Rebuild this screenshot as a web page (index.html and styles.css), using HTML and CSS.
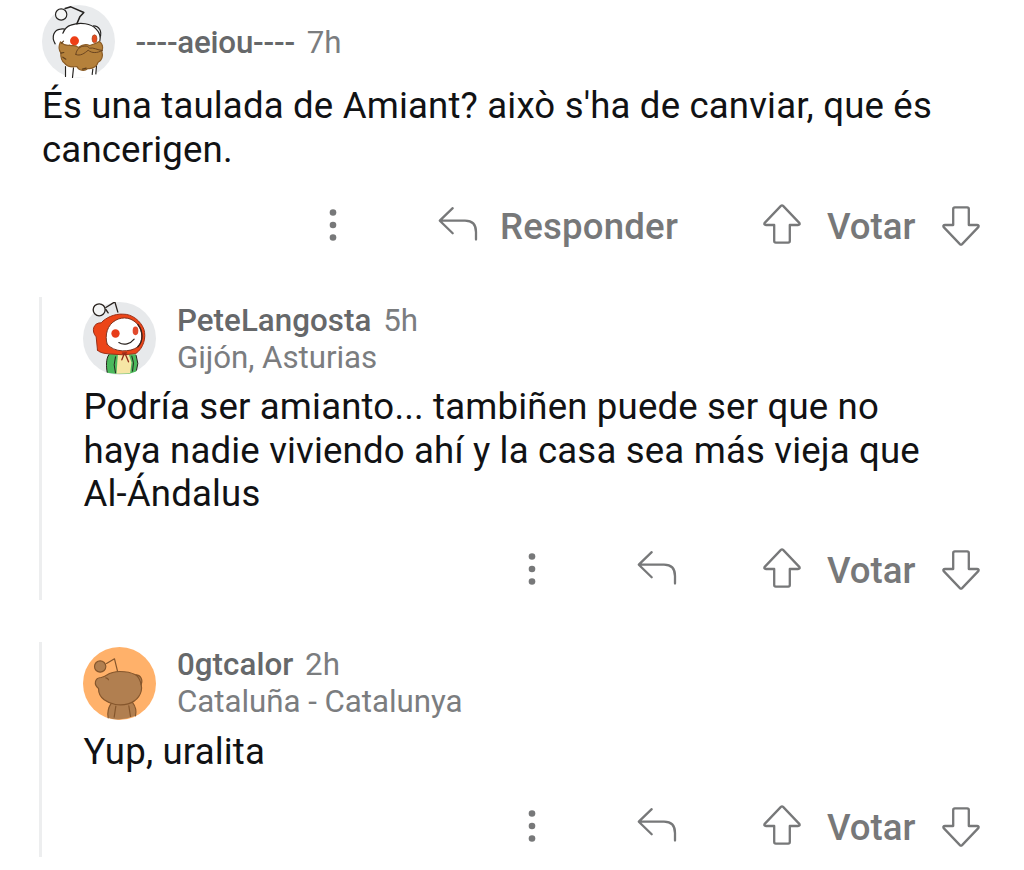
FILE: index.html
```
<!DOCTYPE html>
<html lang="ca">
<head>
    <meta charset="UTF-8">
    <meta name="viewport" content="width=device-width, initial-scale=1.0">
    <title>Comentaris</title>
    <link rel="stylesheet" href="styles.css">
</head>
<body>
    <!-- shared icons -->
    <svg class="sprite">
        <symbol id="dots" viewBox="0 0 8 40">
            <circle cx="4" cy="7.5" r="3.3"/>
            <circle cx="4" cy="20" r="3.3"/>
            <circle cx="4" cy="32.5" r="3.3"/>
        </symbol>
        <symbol id="reply" viewBox="0 0 40 40">
            <path d="M14.7 3.2L1.8 15.7L14.7 28.3M2 15.7H27Q38 15.7 38 27V34.6"/>
        </symbol>
        <symbol id="arrow" viewBox="0 0 38 40">
            <path d="M17.9 1.9Q19 .8 20.1 1.9L36.3 18.9Q37.4 21 35 21H26.8V37Q26.8 38.6 25.2 38.6H12.8Q11.2 38.6 11.2 37V21H3Q.6 21 1.7 18.9Z"/>
        </symbol>
    </svg>

    <div class="comments">
        <div class="comment">
            <div class="header">
                <svg class="avatar" viewBox="35.5 13.5 219 219">
                    <circle cx="145" cy="123" r="109.5" fill="#e9ebed"/>
                    <g stroke="#242220" stroke-width="3.5" stroke-linecap="round" stroke-linejoin="round">
                        <path d="M104 190V231H190L201 217L198 190" fill="#fff" stroke="none"/>
                        <path d="M106 198V228M130 202L127 231M199 196L197 220M188 206L186 222" fill="none"/>
                        <path d="M86 138C66 122 66 90 91 86C103 84 112 90 112 98L104 130Z" fill="#fff" stroke="none"/>
                        <path d="M75 130C62 108 72 88 91 86C103 84 110 88 112 92M190 76C207 76 217 94 209 112" fill="none"/>
                        <path d="M92 137C90 105 98 82 122 74C151 64 183 69 198 86C211 99 214 115 208 132L185 151H108Z" fill="#fff" stroke="none"/>
                        <path d="M98 98C104 84 113 76 122 74C151 64 183 69 198 86C208 96 212 108 209 122" fill="none"/>
                        <path d="M140 70L149 49L161 36L122 19L105 24" fill="none" stroke-width="4.5"/>
                        <circle cx="93" cy="42" r="17" fill="#f5f6f6"/>
                        <path d="M91 124C85 137 86 149 92 157C91 170 93 180 103 188C111 199 125 201 140 198C146 211 163 213 173 204C188 206 201 197 204 185C216 180 219 166 215 153C221 140 216 128 207 123C196 131 186 132 178 135C168 129 154 134 144 141C136 131 128 138 119 134C108 136 98 131 91 124Z" fill="#b5813b" stroke="#8a5b25"/>
                        <path d="M137 162C138 146 151 137 162 137C171 135 176 141 178 143C190 140 202 149 216 150M137 162C150 168 164 158 174 149C185 159 202 158 216 150" fill="none" stroke="#6b4520" stroke-width="3"/>
                        <path d="M94 128L100 122M92 158L101 156M98 170L107 176M157 206L168 203" fill="none" stroke="#5f3f1b"/>
                    </g>
                    <circle cx="133" cy="121" r="13.5" fill="#ed3e16"/>
                    <ellipse cx="193" cy="115" rx="7.5" ry="12" fill="#e64c20" stroke="#9b4b25" stroke-width="2"/>
                </svg>
                <div class="meta">
                    <p><span class="name dashes">----aeiou----</span> <span class="time">7h</span></p>
                </div>
            </div>
            <p class="text">És una taulada de Amiant? això s'ha de canviar, que és cancerigen.</p>
            <div class="actions">
                <svg class="dots"><use href="#dots"/></svg>
                <div class="reply">
                    <svg class="icon"><use href="#reply"/></svg>
                    <span class="label">Responder</span>
                </div>
                <div class="vote">
                    <svg class="arrow"><use href="#arrow"/></svg>
                    <span class="label">Votar</span>
                    <svg class="arrow down"><use href="#arrow"/></svg>
                </div>
            </div>
        </div>

        <div class="comment child">
            <div class="header">
                <svg class="avatar" viewBox="25.5 25.5 219 219">
                    <circle cx="135" cy="135" r="109.5" fill="#e7e9eb"/>
                    <g stroke="#29221e" stroke-width="4" stroke-linecap="round" stroke-linejoin="round">
                        <path d="M103 181C94 195 95 220 98 238L120 241H165L185 234L190 210L184 182Z" fill="#4bb95c" stroke="none"/>
                        <path d="M130 184L126 241L167 239L171 207L163 183Z" fill="#f6e6a5" stroke="none"/>
                        <path d="M103 184C94 195 95 220 98 236M123 190L119 214L123 238M172 188L177 208L174 233M185 186L190 210L186 230" fill="none" stroke-width="3"/>
                        <path d="M69 170L65 130C49 112 57 87 80 88C93 73 121 60 145 62C173 61 199 83 208 107C216 132 207 164 184 180L146 184L103 181C87 180 75 177 69 170Z" fill="#ec4518" stroke="#9a2f17" stroke-width="3"/>
                        <path d="M98 152C90 125 98 94 124 80C146 68 172 72 190 93C206 113 207 143 190 160C168 177 118 178 98 152Z" fill="#fff" stroke="#7b3422" stroke-width="3"/>
                        <path d="M190 93C206 113 207 143 190 160" fill="none" stroke="#3a211b"/>
                        <path d="M94 42L121 25L130 56" fill="none"/>
                        <circle cx="74" cy="49" r="18" fill="#f4f5f5"/>
                        <path d="M94 48L101 58" fill="none"/>
                        <path d="M133 147C148 157 168 151 179 137" fill="none" stroke-width="3.5"/>
                        <path d="M149 181L142 199M152 181L162 205M144 179L156 178" fill="none" stroke="#922919"/>
                    </g>
                    <circle cx="123" cy="120" r="12.5" fill="#e73c19"/>
                    <ellipse cx="183" cy="112" rx="8.5" ry="13" fill="#e14a2d"/>
                </svg>
                <div class="meta">
                    <p><span class="name">PeteLangosta</span> <span class="time">5h</span></p>
                    <p class="place">Gijón, Asturias</p>
                </div>
            </div>
            <p class="text">Podría ser amianto... tambiñen puede ser que no haya nadie viviendo ahí y la casa sea más vieja que Al-Ándalus</p>
            <div class="actions">
                <svg class="dots"><use href="#dots"/></svg>
                <svg class="icon"><use href="#reply"/></svg>
                <div class="vote">
                    <svg class="arrow"><use href="#arrow"/></svg>
                    <span class="label">Votar</span>
                    <svg class="arrow down"><use href="#arrow"/></svg>
                </div>
            </div>
        </div>

        <div class="comment child">
            <div class="header">
                <svg class="avatar" viewBox="25.5 25.5 219 219">
                    <circle cx="135" cy="135" r="109.5" fill="#ffb16a"/>
                    <g fill="#b17f50" stroke="#85562c" stroke-width="3.5" stroke-linecap="round" stroke-linejoin="round">
                        <path d="M110 190C101 205 98 222 101 238Q135 250 183 232C186 215 181 201 174 190Z" stroke="none"/>
                        <path d="M110 195C101 208 98 222 101 238M174 192C183 203 186 218 183 232M124 203L119 236M163 202L168 234" fill="none"/>
                        <path d="M96 75L120 61L130 102" fill="none"/>
                        <circle cx="77" cy="84" r="17"/>
                        <path d="M72 150C57 138 60 118 80 117C87 115 92 114 96 110C107 103 121 99 136 99C155 99 172 103 183 109C198 108 206 124 200 138C206 165 187 188 161 196C137 203 107 198 89 184C77 175 72 165 72 150Z"/>
                        <path d="M94 118Q100 119 102 124M185 110Q196 119 200 139" fill="none"/>
                    </g>
                </svg>
                <div class="meta">
                    <p><span class="name">0gtcalor</span> <span class="time">2h</span></p>
                    <p class="place">Cataluña - Catalunya</p>
                </div>
            </div>
            <p class="text">Yup, uralita</p>
            <div class="actions">
                <svg class="dots"><use href="#dots"/></svg>
                <svg class="icon"><use href="#reply"/></svg>
                <div class="vote">
                    <svg class="arrow"><use href="#arrow"/></svg>
                    <span class="label">Votar</span>
                    <svg class="arrow down"><use href="#arrow"/></svg>
                </div>
            </div>
        </div>
    </div>
</body>
</html>
```
FILE: styles.css
```
* {
    box-sizing: border-box;
}
body {
    margin: 0;
    background: #fff;
    font-family: Roboto, sans-serif;
    color: #111214;
}
p {
    margin: 0;
}
.sprite {
    display: none;
}
.comments {
    padding: 5px 44px 0 39px;
}
.comment {
    padding-left: 3px;
}
.child {
    margin-top: 42px;
    padding: 5px 0 10px 41.4px;
    border-left: 3px solid #edeeef;
}
.comment:first-child + .child {
    margin-top: 51px;
}
.header {
    display: flex;
    align-items: center;
    height: 73px;
}
.avatar {
    width: 73px;
    height: 73px;
    flex: none;
}
.meta {
    margin-left: 20.6px;
    font-size: 31.3px;
    line-height: 37px;
    color: #7b7d7f;
}
.comment:first-child .meta {
    padding-top: 2px;
}
.name {
    font-weight: 500;
    letter-spacing: 0.05px;
    color: #66686a;
}
.dashes {
    letter-spacing: -0.2px;
}
.time {
    margin-left: 4px;
}
.place {
    letter-spacing: -0.05px;
}
.text {
    margin-top: 6px;
    font-size: 36.6px;
    line-height: 43.5px;
    letter-spacing: 0.17px;
}
.child .text {
    margin-top: 10px;
    padding-right: 36px;
}
.actions {
    display: flex;
    align-items: center;
    justify-content: flex-end;
    height: 42px;
    margin-top: 33px;
    color: #777879;
}
.child .actions {
    margin-top: 32px;
}
.dots {
    width: 8px;
    height: 40px;
    fill: currentColor;
}
.icon {
    width: 40px;
    height: 40px;
}
.icon,
.arrow {
    fill: none;
    stroke: currentColor;
    stroke-width: 2.3;
    stroke-linecap: round;
    stroke-linejoin: round;
}
.reply,
.vote {
    display: flex;
    align-items: center;
}
.dots + .reply,
.dots + .icon {
    margin-left: 101px;
}
.reply .label {
    width: 178px;
    margin-left: 22px;
    margin-right: -1px;
    letter-spacing: 0.2px;
}
.vote {
    margin-left: 86px;
}
.vote .label {
    width: 90px;
    margin: 0 25px 0 26px;
}
.arrow {
    width: 38px;
    height: 40px;
    margin-bottom: 2px;
}
.down {
    margin: 2px 0 0;
    transform: rotate(180deg);
}
.label {
    padding-top: 3px;
    font-size: 36.6px;
    font-weight: 500;
    line-height: 39px;
}
```
